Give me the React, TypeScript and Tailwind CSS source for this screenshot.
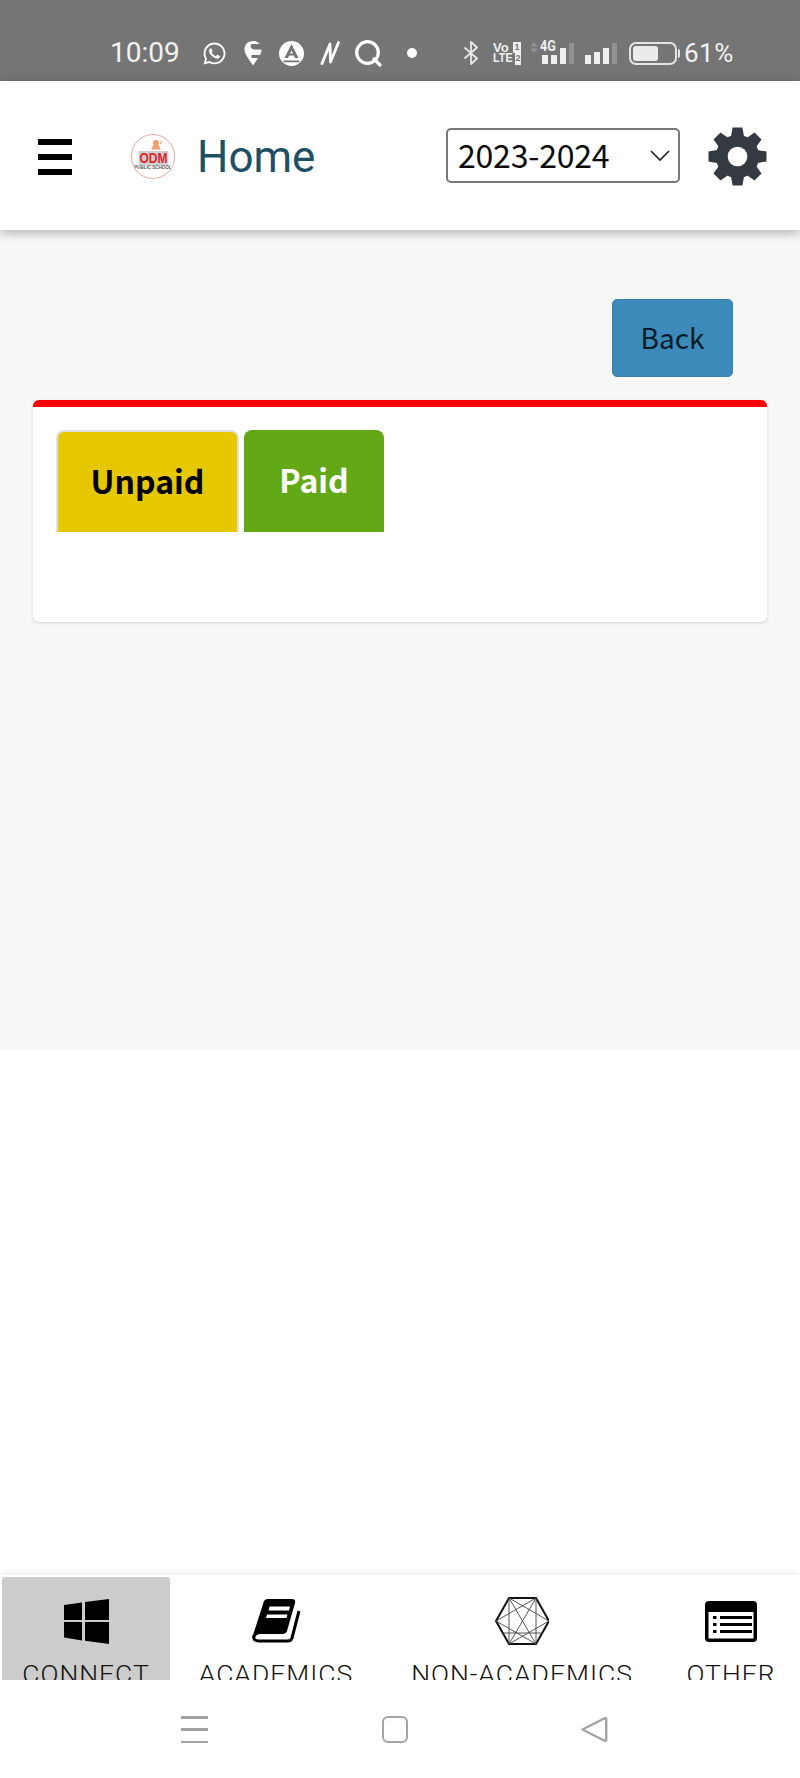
import React from "react";
import { FaWhatsapp } from "react-icons/fa";

const cjk = { fontFamily: '"Noto Sans CJK SC", "Noto Sans", sans-serif' };

function Bars({ hs, dim }: { hs: number[]; dim: number }) {
  return (
    <div className="flex items-end gap-[3.5px] h-[21px]">
      {hs.map((h, i) => (
        <div
          key={i}
          className={i === dim ? "w-[5px] bg-[#929292]" : "w-[5.5px] bg-[#efefef]"}
          style={{ height: h }}
        />
      ))}
    </div>
  );
}

function StatusBar() {
  return (
    <div className="h-[81px] bg-[#757575] flex items-center pt-[25px] pl-[110px] text-[#f2f2f2] font-['Roboto',sans-serif] shrink-0">
      <span className="text-[28px] leading-none w-[92px]">10:09</span>
      <FaWhatsapp className="w-[25px] h-[25px] text-white" />
      <svg className="ml-[17px]" width="18" height="25" viewBox="0 0 18 25">
        <path d="M9 0C4 0 0.5 3.500 0.5 8.500c0 4.500 4 9 8.500 16 1.500-2 3.500-5 5-7.500H7.500v-3H16c1-2 1.500-3.500 1.500-5.500h-7c-2 0-4-1.200-4-3.500S8.500 3 10 3h5.500C14 1 11.500 0 9 0z" fill="#fff" />
      </svg>
      <svg className="ml-[17px]" width="25" height="25" viewBox="0 0 25 25">
        <circle cx="12.500" cy="12.500" r="12.500" fill="#fff" />
        <path d="M12.500 3 5.500 17h3.500l3.500-7.500 3.500 7.500h3.500z" fill="#757575" />
        <path d="M4.500 19.500h16v1.800H4.500z" fill="#757575" />
        <path d="M10 12.500h5v2h-5z" fill="#757575" />
      </svg>
      <svg className="ml-[16px]" width="20" height="24" viewBox="0 0 20 24">
        <path d="M2 22.500 10 3l.5 18L18.500 1.500" stroke="#fff" strokeWidth="2.800" fill="none" strokeLinecap="round" strokeLinejoin="round" />
      </svg>
      <svg className="ml-[15px]" width="27" height="27" viewBox="0 0 27 27">
        <circle cx="12.500" cy="12.500" r="10.800" stroke="#fff" strokeWidth="3.200" fill="none" />
        <path d="M19 19l6 6" stroke="#fff" strokeWidth="3.200" strokeLinecap="round" />
      </svg>
      <div className="ml-[25px] w-[10px] h-[10px] rounded-full bg-white" />
      <svg className="ml-[46px]" width="16" height="24" viewBox="0 0 16 24">
        <path d="M1.500 6.500 14 17.500 8 23V1l6 5.500L1.500 17.500" stroke="#e8e8e8" strokeWidth="1.800" fill="none" strokeLinejoin="round" />
      </svg>
      <div className="ml-[14px] w-[28px] flex flex-col text-[#f0f0f0] font-bold text-[12px] leading-[11.500px] font-['Liberation_Sans',sans-serif]">
        <div className="flex justify-between"><span className="text-[13px]">Vo</span><span className="bg-[#f0f0f0] text-[#757575] w-[8px] text-center text-[9px]">1</span></div>
        <div className="flex justify-between"><span className="scale-x-90 origin-left">LTE</span><span className="bg-[#f0f0f0] text-[#757575] w-[8px] text-center text-[9px]">2</span></div>
      </div>
      <div className="ml-[9px] relative w-[45px] h-[24px] shrink-0">
        <svg className="absolute left-0 top-[1px]" width="8" height="11" viewBox="0 0 8 11">
          <path d="M4 0 7.500 4.500H.5zM4 11 .5 6.500h7z" fill="#959595" />
        </svg>
        <span className="absolute left-[10px] -top-[2px] text-[14px] leading-[14px] font-bold text-[#efefef] font-['Roboto',sans-serif] scale-x-90 origin-left">4G</span>
        <div className="absolute left-[12px] bottom-[1px]"><Bars hs={[9, 9, 16, 21]} dim={3} /></div>
      </div>
      <div className="ml-[10px] -mb-[1px]"><Bars hs={[9, 12, 16, 21]} dim={3} /></div>
      <div className="ml-[12px] flex items-center">
        <div className="w-[48px] h-[23px] border-2 border-[#e4e4e4] rounded-[7px] p-[2px]">
          <div className="w-[25px] h-full bg-[#ebebeb] rounded-[3px]" />
        </div>
        <div className="w-[2px] h-[9px] bg-[#e4e4e4] ml-[1px] rounded-r" />
      </div>
      <span className="ml-[4px] text-[26px] leading-none tracking-[0.5px]">61%</span>
    </div>
  );
}

function Logo() {
  return (
    <div className="w-[44px] h-[45px] rounded-full border border-[#e8a9a0] bg-white flex flex-col items-center justify-center overflow-hidden relative">
      <svg className="absolute top-[5px] left-[17px]" width="14" height="10" viewBox="0 0 14 10">
        <circle cx="7" cy="3" r="3" fill="#f0a070" />
        <path d="M3 9 5 5h4l2 4zM11 4l2-3" stroke="#f0a070" strokeWidth="1.200" fill="#f0a070" />
      </svg>
      <span className="bg-[#cfcfcf] px-[1px] text-[15px] leading-[14px] font-bold text-[#e3242b] font-['Liberation_Sans',sans-serif] mt-[7px] scale-x-[0.8]">ODM</span>
      <span className="text-[4.500px] leading-[5px] font-bold text-[#555] font-['Liberation_Sans',sans-serif] whitespace-nowrap">PUBLIC SCHOOL</span>
    </div>
  );
}

function Gear() {
  const angles = [0, 45, 90, 135, 180, 225, 270, 315];
  return (
    <svg className="ml-[28px]" width="59" height="59" viewBox="0 0 60 60">
      <circle cx="30" cy="30" r="22" fill="#343a40" />
      {angles.map((a) => (
        <path key={a} d="M23 12 25 .5h10L37 12z" fill="#343a40" transform={`rotate(${a} 30 30)`} />
      ))}
      <circle cx="30" cy="30" r="10" fill="#fff" />
    </svg>
  );
}

function Header() {
  return (
    <div className="h-[149px] bg-white relative z-10 shadow-[0_3px_10px_rgba(0,0,0,0.28)] flex items-center pl-[38px] shrink-0 pt-[2px]">
      <div className="w-[34px] flex flex-col gap-[9px]">
        <div className="h-[6px] bg-black" />
        <div className="h-[6px] bg-black" />
        <div className="h-[6px] bg-black" />
      </div>
      <div className="ml-[59px]"><Logo /></div>
      <span className="ml-[22px] w-[249px] text-[44px] leading-none text-[#1f4f63] font-['Roboto',sans-serif]">Home</span>
      <div className="-mt-[2px] w-[234px] h-[55px] border-2 border-[#777777] rounded-[5px] flex items-center pl-[10px] pr-[8px] justify-between" style={cjk}>
        <span className="text-[32px] leading-none text-[#0a0a0a] -mt-[3px] tracking-[-0.2px]">2023-2024</span>
        <svg width="20" height="12" viewBox="0 0 20 12"><path d="M1 1l9 9 9-9" stroke="#222" strokeWidth="1.600" fill="none" /></svg>
      </div>
      <Gear />
    </div>
  );
}

function Main() {
  return (
    <div className="h-[820px] bg-[#f7f7f7] pt-[69px] px-[33px] shrink-0" style={cjk}>
      <div className="flex justify-end pr-[34px]">
        <div className="w-[121px] h-[78px] bg-[#3c8aba] border border-[#3a80ac] rounded-[5px] flex items-center justify-center text-[28px] leading-none text-[#0a1a26] pb-[2px]">Back</div>
      </div>
      <div className="mt-[23px] h-[222px] bg-white border-t-[7px] border-t-[#ff0000] rounded-[6px] shadow-[0_1px_3px_rgba(0,0,0,0.15)] pt-[23px] pl-[23px]">
        <div className="flex gap-[5px]">
          <div className="w-[183px] h-[102px] bg-[#e5c800] border-2 border-b-0 border-[#e0e0d8] rounded-t-[8px] flex items-center justify-center text-[32px] font-bold leading-none text-black pb-[4px]">Unpaid</div>
          <div className="w-[140px] h-[102px] bg-[#63a917] rounded-t-[8px] flex items-center justify-center text-[32px] font-bold leading-none text-white pb-[4px]">Paid</div>
        </div>
      </div>
    </div>
  );
}

function WindowsIcon() {
  return (
    <svg width="45" height="45" viewBox="0 0 45 45">
      <path d="M0 6l18-2.600V21H0zM21 3l24-3v21H21zM0 23h18v18.500L0 38.500zM21 23h24v22l-24-3.200z" fill="#000" />
    </svg>
  );
}

function BookIcon() {
  return (
    <svg width="50" height="46" viewBox="0 0 50 46">
      <path d="M13 3Q14 1 17 1H41Q45 1 44 5L36 33Q35 36 31 36H10Q5 36 4.500 39L2 37z" fill="#000" />
      <path d="M3 37Q1.500 43 8 43H37Q40 43 41 40L48 13" fill="none" stroke="#000" strokeWidth="3" />
      <path d="M18.500 8.500H39L38 12.500H17.500zM16 16.500H36.500L35.500 20H15z" fill="#fff" />
    </svg>
  );
}

function ListIcon() {
  return (
    <svg width="52" height="41" viewBox="0 0 52 41">
      <rect width="52" height="41" rx="4" fill="#000" />
      <rect x="3.500" y="11" width="45" height="26.500" fill="#fff" />
      <path d="M15 15h32v3H15zM15 22h32v3H15zM15 29h32v3H15zM8 15h3.500v3H8zM8 22h3.500v3H8zM8 29h3.500v3H8z" fill="#000" />
    </svg>
  );
}

function Hex() {
  return (
    <svg width="54" height="48" viewBox="0 0 54 48">
      <path d="M14 1h27l13 23-13 23H14L1 24z" fill="none" stroke="#111" strokeWidth="2" />
      <path d="M14 1l27 46M41 1 14 47M1 24 41 1M1 24l40 23M54 24 14 1M54 24 14 47M8 36h39M14 1v46M41 1v46" fill="none" stroke="#444" strokeWidth="0.900" />
    </svg>
  );
}

function NavItem({ w, active, icon, label }: { w: string; active?: boolean; icon: React.ReactNode; label: string }) {
  return (
    <div className={`${w} ${active ? "bg-[#cccccc] rounded-t-[3px]" : ""} flex flex-col items-center shrink-0`}>
      <div className="h-[82px] flex items-center justify-center pt-[6px] shrink-0">{icon}</div>
      <span className="text-[26.500px] leading-[30px] text-[#111] font-['Roboto',sans-serif] font-light tracking-[1px] whitespace-nowrap">{label}</span>
    </div>
  );
}

function BottomNav() {
  return (
    <div className="h-[105px] bg-white overflow-hidden flex pl-[2px] pt-[2px] shrink-0 shadow-[0_-3px_6px_rgba(0,0,0,0.06)] relative">
      <NavItem w="w-[168px]" active icon={<WindowsIcon />} label="CONNECT" />
      <NavItem w="w-[212px]" icon={<BookIcon />} label="ACADEMICS" />
      <NavItem w="w-[280px]" icon={<Hex />} label="NON-ACADEMICS" />
      <NavItem w="w-[138px]" icon={<ListIcon />} label="OTHER" />
    </div>
  );
}

function SystemNav() {
  return (
    <div className="h-[98px] bg-white flex items-start pt-[36px] pl-[181px] shrink-0">
      <div className="w-[27px] h-[27px] flex flex-col justify-between">
        <div className="h-[2.500px] bg-[#a3a3a3]" />
        <div className="h-[2.500px] bg-[#a3a3a3]" />
        <div className="h-[2.500px] bg-[#a3a3a3]" />
      </div>
      <div className="ml-[174px] w-[26px] h-[27px] border-[2.500px] border-[#a3a3a3] rounded-[6px]" />
      <svg className="ml-[173px]" width="27" height="27" viewBox="0 0 27 27">
        <path d="M1.500 13.500 24 2a1 1 0 0 1 1.200.8v21.400a1 1 0 0 1-1.200.8z" fill="none" stroke="#a3a3a3" strokeWidth="2.400" strokeLinejoin="round" />
      </svg>
    </div>
  );
}

export default function App() {
  return (
    <div className="w-[800px] h-[1778px] flex flex-col bg-white overflow-hidden">
      <StatusBar />
      <Header />
      <Main />
      <div className="flex-1 bg-white" />
      <BottomNav />
      <SystemNav />
    </div>
  );
}
